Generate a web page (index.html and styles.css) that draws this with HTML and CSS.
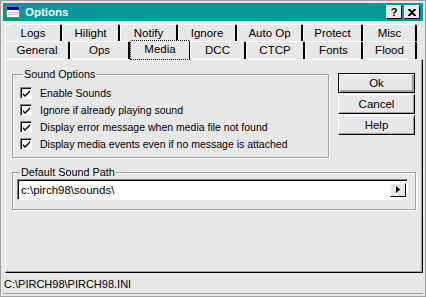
FILE: index.html
```html
<!DOCTYPE html>
<html lang="en">
<head>
  <meta charset="UTF-8" />
  <title>Options</title>
  <link rel="stylesheet" href="styles.css">
</head>
<body>
  <div class="window">
    <div class="titlebar">
      <svg class="app-icon" width="14" height="12" viewBox="0 0 14 12">
        <rect x="0.5" y="0.5" width="13" height="11" fill="#fff" stroke="#808080"/>
        <rect x="1" y="1" width="12" height="3" fill="#0000c0"/>
        <rect x="2" y="6" width="10" height="1" fill="#c0c0c0"/>
        <rect x="2" y="8" width="10" height="1" fill="#c0c0c0"/>
      </svg>
      <span class="title">Options</span>
      <div class="caption-btns">
        <span class="cbtn">?</span>
        <span class="cbtn close">
          <svg width="8" height="7" viewBox="0 0 8 7"><path d="M0 0h2l2 2 2-2h2v1L5 3.5 8 6v1H6L4 5 2 7H0V6l3-2.5L0 1z" fill="#000"/></svg>
        </span>
      </div>
    </div>

    <div class="tabs">
      <div class="tabrow back">
        <div class="tab" style="width:57px">Logs</div>
        <div class="tab" style="width:58px">Hilight</div>
        <div class="tab" style="width:58px">Notify</div>
        <div class="tab" style="width:59px">Ignore</div>
        <div class="tab" style="width:66px">Auto Op</div>
        <div class="tab" style="width:60px">Protect</div>
        <div class="tab" style="width:54px">Misc</div>
      </div>
      <div class="tabrow front">
        <div class="tab" style="width:65px">General</div>
        <div class="tab" style="width:60px">Ops</div>
        <div class="tab active" style="width:60px">Media</div>
        <div class="tab" style="width:56px">DCC</div>
        <div class="tab" style="width:59px">CTCP</div>
        <div class="tab" style="width:58px">Fonts</div>
        <div class="tab" style="width:54px">Flood</div>
      </div>
    </div>

    <div class="panel">
      <div class="top">
        <fieldset class="group sound">
          <legend>Sound Options</legend>
          <div class="check"><span class="cb"><svg width="9" height="9" viewBox="0 0 9 9"><path d="M1 4l2 2 5-5v2L3 8 1 6z" fill="#000"/></svg></span>Enable Sounds</div>
          <div class="check"><span class="cb"><svg width="9" height="9" viewBox="0 0 9 9"><path d="M1 4l2 2 5-5v2L3 8 1 6z" fill="#000"/></svg></span>Ignore if already playing sound</div>
          <div class="check"><span class="cb"><svg width="9" height="9" viewBox="0 0 9 9"><path d="M1 4l2 2 5-5v2L3 8 1 6z" fill="#000"/></svg></span>Display error message when media file not found</div>
          <div class="check"><span class="cb"><svg width="9" height="9" viewBox="0 0 9 9"><path d="M1 4l2 2 5-5v2L3 8 1 6z" fill="#000"/></svg></span>Display media events even if no message is attached</div>
        </fieldset>
        <div class="buttons">
          <div class="btn default">Ok</div>
          <div class="btn">Cancel</div>
          <div class="btn">Help</div>
        </div>
      </div>

      <fieldset class="group path">
        <legend>Default Sound Path</legend>
        <div class="field">
          <span class="value">c:\pirch98\sounds\</span>
          <span class="browse">
            <svg width="4" height="7" viewBox="0 0 4 7"><path d="M0 0l4 3.5L0 7z" fill="#000"/></svg>
          </span>
        </div>
      </fieldset>
    </div>

    <div class="status">C:\PIRCH98\PIRCH98.INI</div>
  </div>
</body>
</html>
```

FILE: styles.css
```css
body {
  margin: 0;
  font-family: "Liberation Sans", Arial, sans-serif;
  font-size: 11px;
  color: #000;
  background: #e8e8e8;
}

.window {
  width: 426px;
  height: 297px;
  box-sizing: border-box;
  border: 1px solid #a0a0a0;
  padding: 2px;
  background: #e8e8e8;
  display: flex;
  flex-direction: column;
}

.titlebar {
  height: 18px;
  background: #009999;
  display: flex;
  align-items: center;
  padding: 0 3px 0 3px;
}

.app-icon {
  margin-right: 5px;
}

.title {
  color: #fff;
  font-weight: bold;
  font-size: 11.5px;
  flex: 1;
}

.caption-btns {
  display: flex;
  gap: 2px;
}

.cbtn {
  width: 14px;
  height: 12px;
  background: #e8e8e8;
  border: 1px solid;
  border-color: #fff #000 #000 #fff;
  display: flex;
  align-items: center;
  justify-content: center;
  font-weight: bold;
  font-size: 11px;
  line-height: 1;
}

/* tabs */
.tabs {
  margin: 3px 0 0 2px;
}

.tabrow {
  display: flex;
  height: 17px;
}

.tabrow.front {
  height: 18px;
}

.tab {
  box-sizing: border-box;
  border-left: 1px solid #fff;
  border-top: 1px solid #fff;
  border-right: 2px solid #000;
  border-top-left-radius: 2px;
  border-top-right-radius: 2px;
  text-align: center;
  line-height: 16px;
  font-size: 11.5px;
}

.tab.active {
  margin-top: -1px;
  height: 20px;
  position: relative;
  z-index: 1;
  border-right: 1px solid #000;
  outline: 1px dotted #000;
  outline-offset: -1px;
  background: #e8e8e8;
}

/* panel */
.panel {
  width: 418px;
  height: 214px;
  margin-left: 2px;
  box-sizing: border-box;
  border: 1px solid;
  border-color: #fff #000 #000 #fff;
  box-shadow: inset -1px -1px 0 #a0a0a0;
  padding: 8px 6px 0 6px;
}

.top {
  display: flex;
  align-items: flex-start;
}

.group {
  margin: 0;
  border: 1px solid #a0a0a0;
  box-shadow: 1px 1px 0 #fff, inset 1px 1px 0 #fff;
  padding: 0;
}

.group legend {
  margin-left: 3px;
  padding: 0 1px;
  font-size: 10.8px;
  line-height: 13px;
}

.sound {
  width: 317px;
  height: 90px;
  box-sizing: border-box;
  padding: 3px 0 0 7px;
}

.check {
  display: flex;
  align-items: center;
  height: 17px;
  font-size: 10.5px;
}

.cb {
  width: 9px;
  height: 9px;
  background: #fff;
  border: 1px solid;
  border-color: #808080 #fff #fff #808080;
  box-shadow: inset 1px 1px 0 #000;
  padding: 1px 0 0 1px;
  margin-right: 8px;
  display: flex;
}

.buttons {
  margin: 5px 0 0 9px;
  display: flex;
  flex-direction: column;
  gap: 1px;
}

.btn {
  width: 77px;
  height: 20px;
  box-sizing: border-box;
  border: 1px solid;
  border-color: #fff #000 #000 #fff;
  box-shadow: inset -1px -1px 0 #a0a0a0;
  display: flex;
  align-items: center;
  justify-content: center;
  font-size: 11.5px;
}

.btn.default {
  border: 1px solid #000;
  box-shadow: inset 1px 1px 0 #fff, inset -2px -2px 0 #a0a0a0;
}

.path {
  margin-top: 8px;
  width: 404px;
  height: 44px;
  box-sizing: border-box;
  padding: 0 0 0 4px;
}

.field {
  width: 391px;
  height: 21px;
  box-sizing: border-box;
  background: #fff;
  border: 1px solid;
  border-color: #808080 #fff #fff #808080;
  box-shadow: inset 1px 1px 0 #000;
  display: flex;
  align-items: center;
  padding: 0 1px 0 3px;
}

.value {
  flex: 1;
  font-size: 11.5px;
}

.browse {
  width: 16px;
  height: 14px;
  box-sizing: border-box;
  background: #e8e8e8;
  border: 1px solid;
  border-color: #fff #000 #000 #fff;
  display: flex;
  align-items: center;
  justify-content: center;
}

.status {
  height: 19px;
  margin-top: 1px;
  padding-left: 1px;
  display: flex;
  align-items: center;
  font-size: 11px;
  border-bottom: 1px solid #a0a0a0;
}
```
